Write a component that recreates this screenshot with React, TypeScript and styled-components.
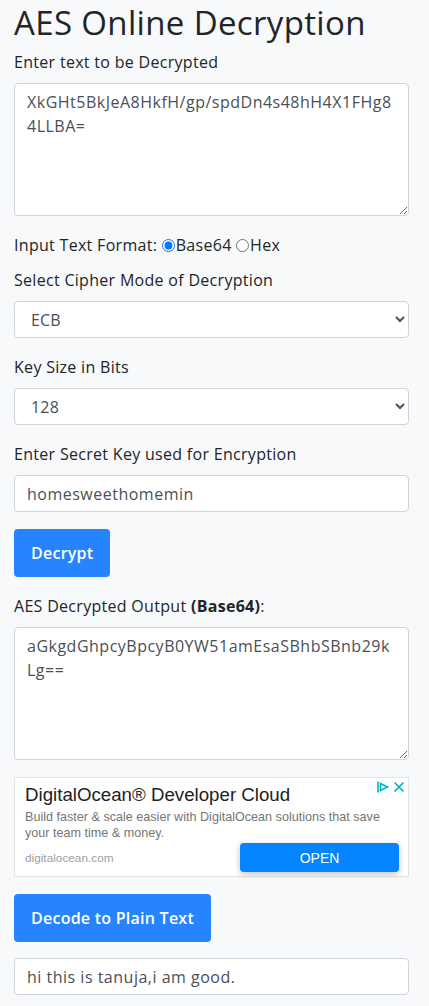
import React from "react";
import styled, { createGlobalStyle } from "styled-components";

const GlobalStyle = createGlobalStyle`
  html, body { margin: 0; padding: 0; background: #f8f9fa; }
  body {
    font-family: "Open Sans", "DejaVu Sans", sans-serif;
    color: #212529;
  }
  *, *::before, *::after { box-sizing: border-box; }
`;

const Page = styled.main`
  width: 429px;
  padding: 4px 20px 8px 14px;
`;

const Title = styled.h1`
  margin: 0 0 8px;
  font-size: 33px;
  font-weight: 500;
  letter-spacing: 0.35px;
  line-height: 38px;
  color: #212529;
`;

const Group = styled.div<{ $gap?: number }>`
  margin-bottom: ${(p) => p.$gap ?? 17}px;
`;

const Label = styled.label`
  display: block;
  font-size: 16px;
  letter-spacing: 0.3px;
  line-height: 24px;
  margin-bottom: 9px;
  color: #212529;
`;

const fieldBase = `
  display: block;
  width: 100%;
  border: 1px solid #ced4da;
  border-radius: 4px;
  background: #fff;
  color: #495057;
  font-family: "Open Sans", "DejaVu Sans", sans-serif;
  font-size: 16px;
  letter-spacing: 0.5px;
  line-height: 24px;
  padding: 6px 12px;
  margin: 0;
  outline: none;
`;

const TextArea = styled.textarea`
  ${fieldBase}
  height: 133px;
  resize: vertical;
`;

const Input = styled.input`
  ${fieldBase}
  height: 37px;
`;

const Select = styled.select`
  ${fieldBase}
  letter-spacing: 0.2px;
  height: 37px;
`;

const RadioRow = styled.div`
  font-size: 16px;
  letter-spacing: 0.3px;
  line-height: 24px;
  margin-bottom: 11px;
  color: #212529;
`;

const Radio = styled.input`
  margin: 0 1px 0 0;
  width: 13px;
  height: 13px;
  vertical-align: -1px;
`;

const Button = styled.button`
  display: inline-block;
  border: none;
  border-radius: 4px;
  background: #2684ff;
  color: #fff;
  font-family: "Open Sans", "DejaVu Sans", sans-serif;
  font-weight: 600;
  font-size: 16px;
  letter-spacing: 0.25px;
  line-height: 24px;
  padding: 12px 17px;
  cursor: pointer;
`;

const Strong = styled.b`
  font-weight: 700;
`;

const Ad = styled.div`
  position: relative;
  background: #fff;
  border: 1px solid #e3e3e3;
  padding: 6px 9px 4px 10px;
  margin-bottom: 17px;
  font-family: "Liberation Sans", Arial, sans-serif;
`;

const AdTitle = styled.div`
  font-size: 18.7px;
  line-height: 22px;
  color: #202124;
`;

const AdDesc = styled.div`
  margin-top: 3px;
  font-size: 12.6px;
  line-height: 16px;
  color: #757575;
`;

const AdFooter = styled.div`
  display: flex;
  justify-content: space-between;
  align-items: center;
  margin-top: 2px;
`;

const AdUrl = styled.span`
  font-size: 11.8px;
  color: #a0a0a0;
`;

const AdButton = styled.span`
  width: 159px;
  height: 29px;
  display: flex;
  align-items: center;
  justify-content: center;
  background: #0285ff;
  color: #fff;
  font-size: 14px;
  border-radius: 4px;
  box-shadow: 0 2px 6px rgba(0, 0, 0, 0.25);
`;

const AdIcons = styled.div`
  position: absolute;
  top: 2px;
  right: 3px;
  display: flex;
  gap: 3px;
`;

const AdChoices = () => (
  <svg width="14" height="14" viewBox="0 0 14 14" fill="none" stroke="#00aecd" strokeWidth="1.6">
    <path d="M2 1.5 V12.5" />
    <path d="M4.5 3.5 L11.5 7 L4.5 10.5 Z" />
  </svg>
);

const AdClose = () => (
  <svg width="12" height="14" viewBox="0 0 12 14" fill="none" stroke="#00aecd" strokeWidth="1.6">
    <path d="M1.5 2.5 L10.5 11.5 M10.5 2.5 L1.5 11.5" />
  </svg>
);

export default function App() {
  return (
    <Page>
      <GlobalStyle />
      <Title>AES Online Decryption</Title>

      <Group>
        <Label>Enter text to be Decrypted</Label>
        <TextArea readOnly defaultValue="XkGHt5BkJeA8HkfH/gp/spdDn4s48hH4X1FHg84LLBA=" />
      </Group>

      <RadioRow>
        Input Text Format: <Radio type="radio" name="fmt" defaultChecked />Base64{" "}
        <Radio type="radio" name="fmt" />Hex
      </RadioRow>

      <Group>
        <Label>Select Cipher Mode of Decryption</Label>
        <Select defaultValue="ECB">
          <option value="ECB">ECB</option>
          <option value="CBC">CBC</option>
        </Select>
      </Group>

      <Group>
        <Label>Key Size in Bits</Label>
        <Select defaultValue="128">
          <option value="128">128</option>
          <option value="192">192</option>
          <option value="256">256</option>
        </Select>
      </Group>

      <Group>
        <Label>Enter Secret Key used for Encryption</Label>
        <Input readOnly defaultValue="homesweethomemin" />
      </Group>

      <Group>
        <Button>Decrypt</Button>
      </Group>

      <Group>
        <Label>
          AES Decrypted Output <Strong>(Base64)</Strong>:
        </Label>
        <TextArea readOnly defaultValue="aGkgdGhpcyBpcyB0YW51amEsaSBhbSBnb29kLg==" />
      </Group>

      <Ad>
        <AdIcons>
          <AdChoices />
          <AdClose />
        </AdIcons>
        <AdTitle>DigitalOcean® Developer Cloud</AdTitle>
        <AdDesc>
          Build faster &amp; scale easier with DigitalOcean solutions that save your team time &amp; money.
        </AdDesc>
        <AdFooter>
          <AdUrl>digitalocean.com</AdUrl>
          <AdButton>OPEN</AdButton>
        </AdFooter>
      </Ad>

      <Group $gap={16}>
        <Button>Decode to Plain Text</Button>
      </Group>

      <Input readOnly defaultValue="hi this is tanuja,i am good." />
    </Page>
  );
}
